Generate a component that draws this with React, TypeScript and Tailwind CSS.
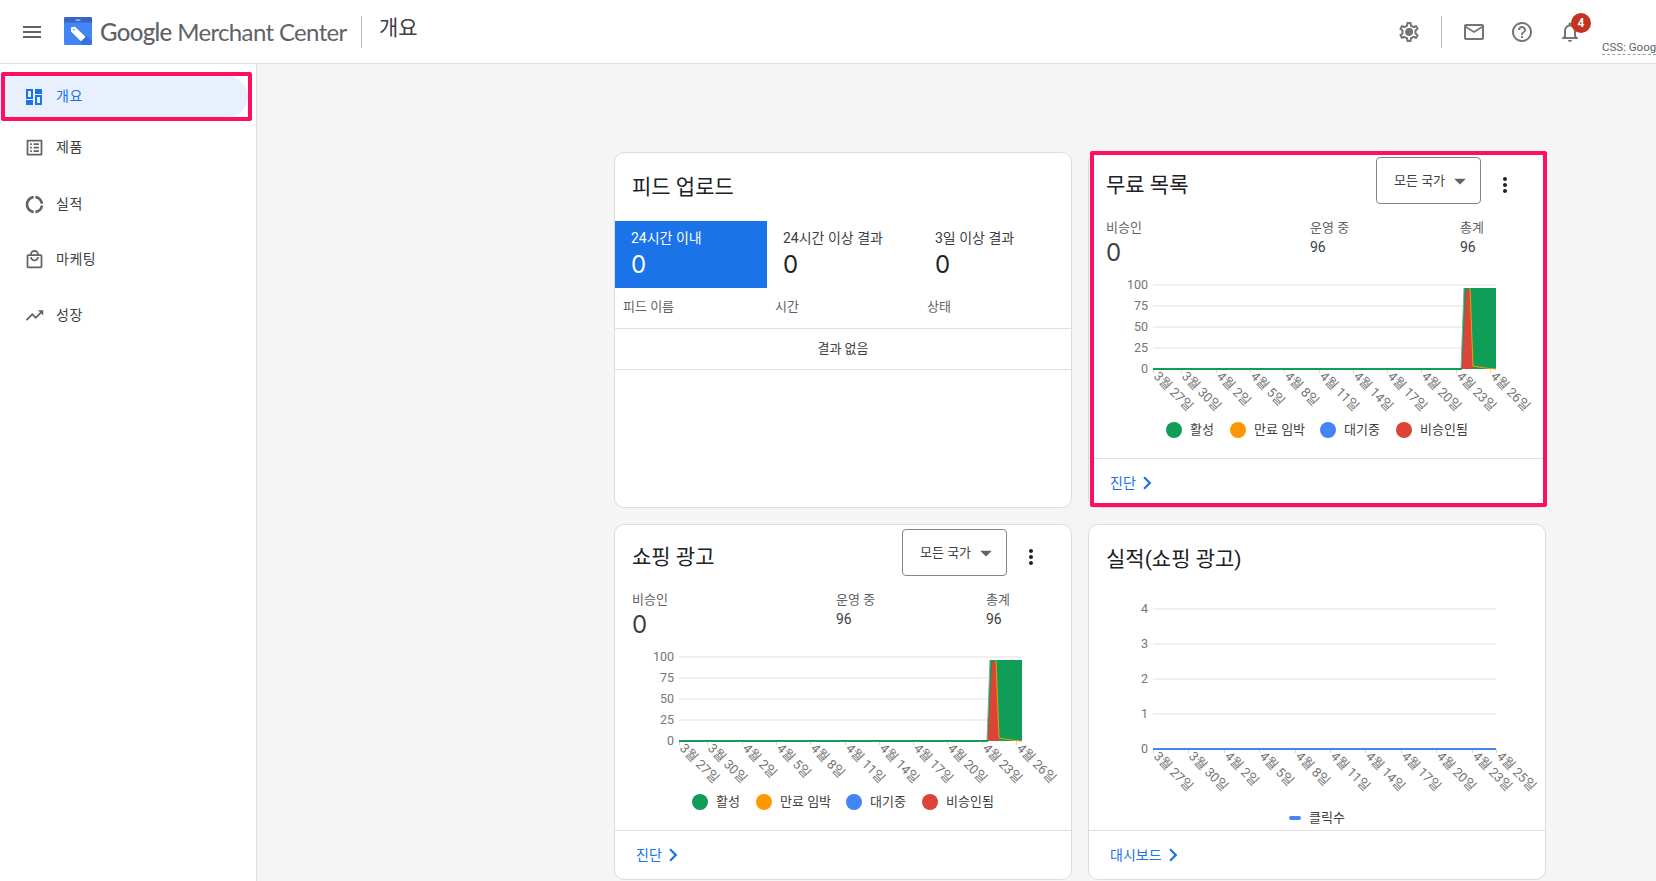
import React from 'react';
import {
  MdMenu,
  MdOutlineListAlt,
  MdOutlineDonutLarge,
  MdOutlineLocalMall,
  MdTrendingUp,
  MdOutlineSettings,
  MdMailOutline,
  MdHelpOutline,
  MdOutlineNotifications,
  MdMoreVert,
  MdArrowDropDown,
  MdChevronRight,
} from 'react-icons/md';

// half outlined, half filled tiles, the md icon set only has the all-outline one
const DashboardIcon = ({ className }: { className?: string }) => (
  <svg viewBox="0 0 16 16" fill="none" className={className}>
    <rect x="1" y="1" width="5" height="8" stroke="currentColor" strokeWidth="2" />
    <rect x="9" y="0" width="7" height="5" fill="currentColor" />
    <rect x="0" y="11" width="7" height="5" fill="currentColor" />
    <rect x="10" y="7" width="5" height="8" stroke="currentColor" strokeWidth="2" />
  </svg>
);

const navItems = [
  { label: '개요', Icon: null, spacing: '', active: true },
  { label: '제품', Icon: MdOutlineListAlt, spacing: 'mt-[10px]', active: false },
  { label: '실적', Icon: MdOutlineDonutLarge, spacing: 'mt-[16px]', active: false },
  { label: '마케팅', Icon: MdOutlineLocalMall, spacing: 'mt-[14px]', active: false },
  { label: '성장', Icon: MdTrendingUp, spacing: 'mt-[15px]', active: false },
];

const statusLegend = [
  { label: '활성', color: 'bg-[#0f9d58]', width: 'w-[64px]' },
  { label: '만료 임박', color: 'bg-[#ff9800]', width: 'w-[90px]' },
  { label: '대기중', color: 'bg-[#4285f4]', width: 'w-[76px]' },
  { label: '비승인됨', color: 'bg-[#db4437]', width: 'w-[76px]' },
];

const listingTicks = [
  [64, '3월 27일'],
  [92, '3월 30일'],
  [127, '4월 2일'],
  [161, '4월 5일'],
  [195, '4월 8일'],
  [230, '4월 11일'],
  [264, '4월 14일'],
  [298, '4월 17일'],
  [332, '4월 20일'],
  [367, '4월 23일'],
  [401, '4월 26일'],
] as const;

const clickTicks = [
  [64, '3월 27일'],
  [99, '3월 30일'],
  [135, '4월 2일'],
  [170, '4월 5일'],
  [206, '4월 8일'],
  [241, '4월 11일'],
  [276, '4월 14일'],
  [312, '4월 17일'],
  [347, '4월 20일'],
  [383, '4월 23일'],
  [407, '4월 25일'],
] as const;

const AxisLabels = ({ ticks, y0 }: { ticks: readonly (readonly [number, string])[]; y0: number }) => (
  <>
    {ticks.map(([x, label]) => (
      <g key={label}>
        <line x1={x + 0.5} x2={x + 0.5} y1={y0} y2={y0 + 4} stroke="#d6d6d6" />
        <text x={x} y={y0 + 8} fontSize="13" fill="#757575" transform={`rotate(45 ${x} ${y0 + 8})`}>
          {label}
        </text>
      </g>
    ))}
  </>
);

const StatusChart = () => {
  const rows: [number, string][] = [
    [15, '100'],
    [36, '75'],
    [57, '50'],
    [78, '25'],
    [99, '0'],
  ];
  return (
    <svg width="456" height="150" className="block">
      {rows.map(([y, label]) => (
        <g key={label}>
          {label !== '0' && <line x1="64" x2="407" y1={y} y2={y} stroke="#f0f0f0" strokeWidth="2" />}
          <text x="59" y={y + 4} fontSize="12.5" fill="#757575" textAnchor="end">
            {label}
          </text>
        </g>
      ))}
      <AxisLabels ticks={listingTicks} y0={99} />
      <path d="M372 99 L375 18 L407 18 L407 99 Z" fill="#0f9d58" />
      <path d="M372 99 L375 18" stroke="#9e9e9e" strokeWidth="1" fill="none" />
      <path d="M373 99 L377 20 L381 20 L384 96 L384 99 Z" fill="#db4437" />
      <path d="M381 18 L384 96 L396 98 L407 99" stroke="#ff9800" strokeWidth="1" fill="none" />
      <line x1="64" x2="373" y1="99" y2="99" stroke="#0f9d58" strokeWidth="2" />
    </svg>
  );
};

const ClicksChart = () => {
  const rows: [number, string][] = [
    [19, '4'],
    [54, '3'],
    [89, '2'],
    [124, '1'],
    [159, '0'],
  ];
  return (
    <svg width="456" height="216" className="block">
      {rows.map(([y, label]) => (
        <g key={label}>
          {label !== '0' && <line x1="64" x2="407" y1={y} y2={y} stroke="#f0f0f0" strokeWidth="2" />}
          <text x="59" y={y + 4} fontSize="12.5" fill="#757575" textAnchor="end">
            {label}
          </text>
        </g>
      ))}
      <AxisLabels ticks={clickTicks} y0={159} />
      <line x1="64" x2="407" y1="159" y2="159" stroke="#4285f4" strokeWidth="2" />
    </svg>
  );
};

const CardFooter = ({ label }: { label: string }) => (
  <div className="mt-auto h-[49px] border-t border-[#e0e0e0] flex items-center pl-[21px]">
    <span className="text-[14px] text-[#1a73e8]">{label}</span>
    <MdChevronRight className="w-[26px] h-[26px] -ml-[2px] text-[#1a73e8]" />
  </div>
);

const StatusCard = ({ title, highlighted }: { title: string; highlighted?: boolean }) => (
  <section className="relative h-[356px] flex flex-col bg-white border border-[#dadce0] rounded-[10px]">
    {/* Header */}
    <div className="h-[62px] flex items-center pl-[17px] shrink-0">
      <h2 className="text-[21px] font-normal text-[#202124] translate-y-[2px]">{title}</h2>
      <button className="ml-auto -mt-[7px] w-[105px] h-[47px] flex items-center pl-[17px] border border-[#80868b] rounded-[4px] text-[13px] text-[#3c4043]">
        모든 국가
        <MdArrowDropDown className="w-[28px] h-[28px] ml-[1px] -mr-1 text-[#5f6368]" />
      </button>
      <MdMoreVert className="w-[24px] h-[24px] ml-[12px] mr-[28px] mt-[2px] text-[#202124]" />
    </div>

    {/* Stats */}
    <div className="h-[55px] flex pl-[17px] shrink-0 text-[13px] text-[#5f6368]">
      <div className="w-[204px]">
        <div className="leading-[26px]">비승인</div>
        <div className="font-['Inter'] text-[24px] leading-[24px] text-[#3c4043]">0</div>
      </div>
      <div className="w-[150px]">
        <div className="leading-[20px] mt-[3px]">운영 중</div>
        <div className="text-[14px] leading-[18px] text-[#3c4043]">96</div>
      </div>
      <div>
        <div className="leading-[20px] mt-[3px]">총계</div>
        <div className="text-[14px] leading-[18px] text-[#3c4043]">96</div>
      </div>
    </div>

    <StatusChart />

    <div className="h-[20px] flex items-center pl-[77px] shrink-0">
      {statusLegend.map((item) => (
        <div key={item.label} className={`flex items-center gap-2 ${item.width}`}>
          <span className={`w-4 h-4 rounded-full shrink-0 ${item.color}`} />
          <span className="text-[13px] text-[#3c4043] whitespace-nowrap">{item.label}</span>
        </div>
      ))}
    </div>

    <CardFooter label="진단" />

    {highlighted && (
      <div className="absolute left-[1px] right-[-2px] top-[-2px] bottom-0 border-4 border-[#ff0f5f] rounded-[2px]" />
    )}
  </section>
);

const FeedCard = () => (
  <section className="h-[356px] flex flex-col bg-white border border-[#dadce0] rounded-[10px]">
    <div className="h-[68px] flex items-center pl-[17px] pt-[1px]">
      <h2 className="text-[21px] font-normal text-[#202124]">피드 업로드</h2>
    </div>
    <div className="h-[67px] grid grid-cols-[152px_152px_152px]">
      <div className="bg-[#1a73e8] text-white pl-[16px] pt-[7px]">
        <div className="text-[14px] leading-[20px]">24시간 이내</div>
        <div className="font-['Inter'] text-[24px] leading-[34px]">0</div>
      </div>
      <div className="pl-[16px] pt-[7px] text-[#202124]">
        <div className="text-[14px] leading-[20px] text-[#3c4043]">24시간 이상 결과</div>
        <div className="font-['Inter'] text-[24px] leading-[34px]">0</div>
      </div>
      <div className="pl-[16px] pt-[7px] text-[#202124]">
        <div className="text-[14px] leading-[20px] text-[#3c4043]">3일 이상 결과</div>
        <div className="font-['Inter'] text-[24px] leading-[34px]">0</div>
      </div>
    </div>
    <div className="h-[41px] grid grid-cols-[152px_152px_152px] items-center border-b border-[#e0e0e0] text-[13px] text-[#5f6368] pb-[2px]">
      <span className="pl-2">피드 이름</span>
      <span className="pl-2">시간</span>
      <span className="pl-2">상태</span>
    </div>
    <div className="h-[41px] flex items-center justify-center border-b border-[#e0e0e0] text-[13px] text-[#3c4043]">
      결과 없음
    </div>
  </section>
);

const PerformanceCard = () => (
  <section className="h-[356px] flex flex-col bg-white border border-[#dadce0] rounded-[10px]">
    <div className="h-[65px] flex items-center pl-[17px] pt-[4px] shrink-0">
      <h2 className="text-[21px] font-normal text-[#202124]">실적(쇼핑 광고)</h2>
    </div>
    <ClicksChart />
    <div className="h-[20px] flex items-center pl-[200px] gap-2 shrink-0 mt-[2px]">
      <span className="w-[12px] h-[4px] rounded-full bg-[#4285f4]" />
      <span className="text-[13px] text-[#3c4043]">클릭수</span>
    </div>
    <CardFooter label="대시보드" />
  </section>
);

const Logo = () => (
  <svg width="28" height="28" viewBox="0 0 28 28" className="shrink-0">
    <rect width="28" height="28" rx="1.5" fill="#4285f4" />
    <path d="M1.5 0H26.5A1.5 1.5 0 0 1 28 1.5V5.5H0V1.5A1.5 1.5 0 0 1 1.5 0Z" fill="#3c62c8" />
    <rect x="11.5" y="2.6" width="5" height="1.1" rx="0.55" fill="#aecbfa" />
    <path d="M15 24L21 18L28 24V28H19Z" fill="#2f62d0" opacity="0.6" />
    <path d="M7.5 10.2L11 9.8L21 19.2Q21.6 19.8 21 20.4L17.6 23.8Q17 24.4 16.4 23.8L7 14.6V11.2Q7 10.4 7.5 10.2Z" fill="#ffffff" />
    <circle cx="10" cy="12.8" r="1" fill="#8ab4f8" />
  </svg>
);

export default function App() {
  return (
    <div className="w-full h-screen overflow-hidden flex flex-col bg-white font-['Roboto','Noto_Sans_CJK_KR',sans-serif]">
      {/* Top bar */}
      <header className="h-[64px] shrink-0 flex items-center border-b border-[#e0e0e0] bg-white">
        <MdMenu className="w-6 h-6 ml-[20px] text-[#5f6368]" />
        <div className="ml-[20px] -mt-[2px]">
          <Logo />
        </div>
        <div className="ml-[8px] w-[246px] text-[24px] tracking-[-0.65px] text-[#5f6368] whitespace-nowrap font-['Lato','Roboto',sans-serif]">
          <span className="font-medium">Google</span> Merchant Center
        </div>
        <div className="ml-[15px] w-px h-[32px] bg-[#bdbdbd]" />
        <div className="ml-[17px] -mt-[5px] text-[21px] text-[#3c4043]">개요</div>
        <div className="ml-auto flex items-center">
          <div className="relative">
            <MdOutlineSettings className="w-6 h-6 text-[#757575]" />
            <span className="absolute left-[8.5px] top-[8.5px] w-[7px] h-[7px] rounded-full bg-[#757575]" />
          </div>
          <div className="ml-[20px] w-px h-[32px] bg-[#bdbdbd]" />
          <MdMailOutline className="ml-[20px] w-6 h-6 text-[#757575]" />
          <MdHelpOutline className="ml-[24px] w-6 h-6 text-[#757575]" />
          <div className="relative ml-[24px]">
            <MdOutlineNotifications className="w-6 h-6 text-[#757575]" />
            <span className="absolute -top-[7px] left-[13px] w-5 h-5 rounded-full bg-[#c5321f] text-white text-[12px] font-bold flex items-center justify-center">
              4
            </span>
          </div>
          <div className="ml-[20px] w-[54px] overflow-hidden mt-[32px] border-b border-dashed border-[#9e9e9e] text-[11.5px] leading-[14px] text-[#5f6368] whitespace-nowrap">
            CSS: Goog
          </div>
        </div>
      </header>

      <div className="flex flex-1 min-h-0">
        {/* Sidebar */}
        <aside className="relative w-[257px] shrink-0 border-r border-[#e0e0e0] pt-3 pr-[8px] bg-white">
          {navItems.map(({ label, Icon, spacing, active }) => (
            <div
              key={label}
              className={`h-[41px] flex items-center gap-[11px] rounded-r-full ${spacing} ${
                active ? 'bg-[#e8f0fe] text-[#1a73e8] pl-[26px]' : 'text-[#3c4043] pl-[24px]'
              }`}
            >
              {Icon ? (
                <Icon className="w-[21px] h-[21px] text-[#5f6368]" />
              ) : (
                <DashboardIcon className="w-[16px] h-[16px] mr-[3px] text-[#1a73e8]" />
              )}
              <span className="text-[14px] tracking-[0.5px]">{label}</span>
            </div>
          ))}
          <div className="absolute left-[1px] top-[8px] w-[251px] h-[49px] border-4 border-[#ff0f5f] rounded-[2px]" />
        </aside>

        {/* Dashboard cards */}
        <main className="flex-1 bg-[#f5f5f5] pl-[357px] pt-[88px] overflow-hidden">
          <div className="grid grid-cols-[458px_458px] gap-4">
            <FeedCard />
            <StatusCard title="무료 목록" highlighted />
            <StatusCard title="쇼핑 광고" />
            <PerformanceCard />
          </div>
        </main>
      </div>
    </div>
  );
}
